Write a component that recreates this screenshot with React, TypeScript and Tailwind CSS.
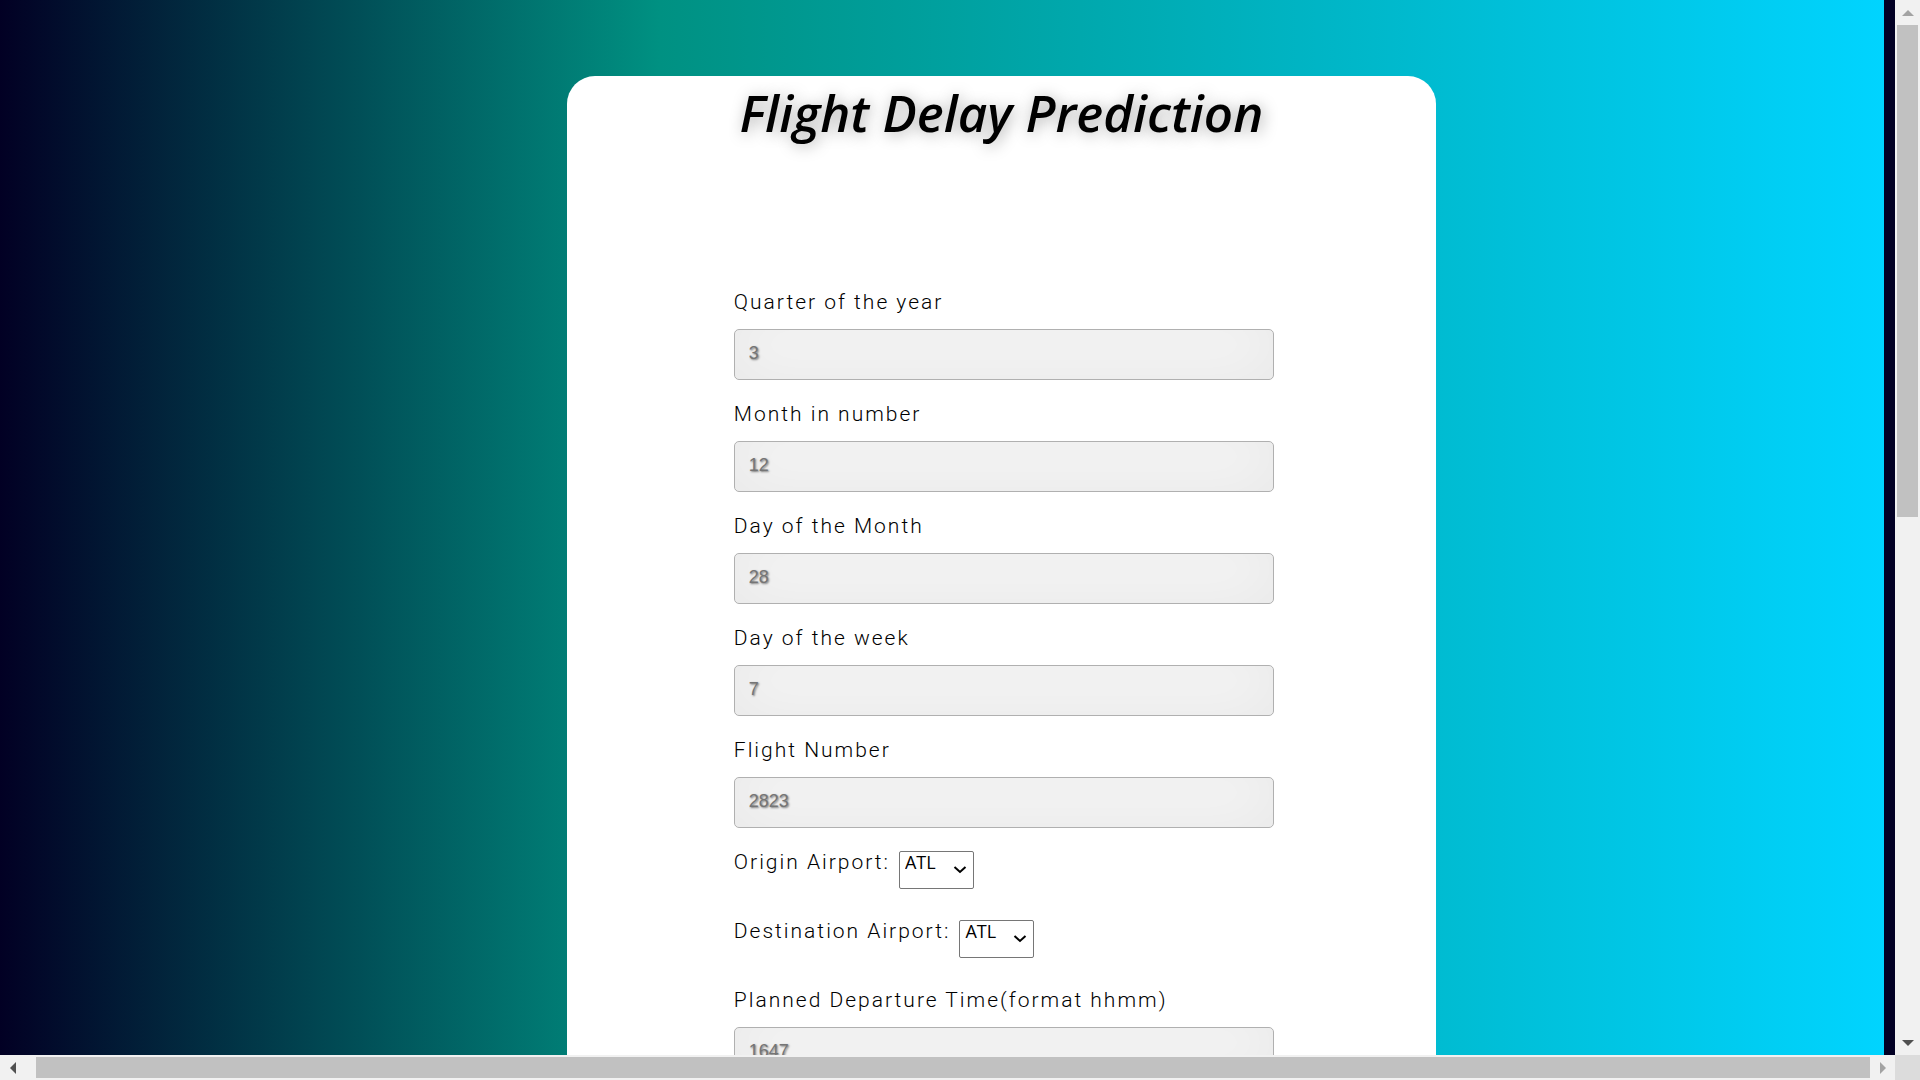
import React from "react";

const dateFields = [
  { id: "quarter", label: "Quarter of the year", placeholder: "3" },
  { id: "month", label: "Month in number", placeholder: "12" },
  { id: "day-of-month", label: "Day of the Month", placeholder: "28" },
  { id: "day-of-week", label: "Day of the week", placeholder: "7" },
  { id: "flight-number", label: "Flight Number", placeholder: "2823" },
];

const airportFields = [
  { id: "origin", label: "Origin Airport:" },
  { id: "destination", label: "Destination Airport:" },
];

const airports = ["ATL", "SEA", "DTW", "MSP", "JFK"];

const labelClass =
  "font-['Roboto',sans-serif] text-[21px] leading-7 font-light tracking-[2px] text-black";

function TextField({ id, label, placeholder }: { id: string; label: string; placeholder: string }) {
  return (
    <div className="flex flex-col gap-[13px] pb-5">
      <label htmlFor={id} className={labelClass}>
        {label}
      </label>
      <input
        id={id}
        type="text"
        placeholder={placeholder}
        className="h-[51px] w-full rounded-[5px] border border-[#b0b0b0] bg-[#f7f7f7] px-[14px] pb-[2px] font-['Liberation_Sans',Arial,sans-serif] text-[18px] text-black shadow-[inset_0_-10px_60px_#0000000f] [text-shadow:1px_1px_2px_#00000080] placeholder:text-[#757575] placeholder:opacity-100"
      />
    </div>
  );
}

function AirportField({ id, label }: { id: string; label: string }) {
  return (
    <div className="flex h-[69px] items-start gap-[9px]">
      <label htmlFor={id} className={labelClass}>
        {label}
      </label>
      <div className="relative mt-[3px]">
        <select
          id={id}
          className="block h-[38px] w-[75px] appearance-none rounded-[2px] border border-[#767676] bg-white pb-4 pl-[5px] font-['Open_Sans',sans-serif] text-[18px] leading-5 text-black"
        >
          {airports.map((code) => (
            <option key={code}>{code}</option>
          ))}
        </select>
        <svg
          viewBox="0 0 14 8"
          className="pointer-events-none absolute top-[15px] right-[7px] h-2 w-[14px] fill-none stroke-black stroke-2"
        >
          <path d="M1.5 1 L7 6 L12.5 1" />
        </svg>
      </div>
    </div>
  );
}

export default function App() {
  return (
    <div className="grid h-screen grid-cols-[1fr_25px] grid-rows-[1fr_25px] overflow-hidden">
      <main className="flex min-h-0 min-w-0 overflow-hidden bg-[#020024]">
        <div className="mr-[11px] flex-1 bg-[linear-gradient(90deg,#020024_0%,#009182_35%,#00d4ff_100%)]">
          <div className="mt-19 ml-[30.1%] flex w-[46.1%] flex-col rounded-t-[28px] bg-white pb-20">
            <h1 className="h-[212px] pt-[6px] text-center font-['Open_Sans',sans-serif] text-[51px] leading-15 font-semibold italic text-black [text-shadow:2px_2px_15px_#00000059]">
              Flight Delay Prediction
            </h1>
            <form className="ml-[19.2%] w-[62.2%]">
              {dateFields.map((field) => (
                <TextField key={field.id} {...field} />
              ))}
              {airportFields.map((field) => (
                <AirportField key={field.id} {...field} />
              ))}
              <TextField
                id="departure"
                label="Planned Departure Time(format hhmm)"
                placeholder="1647"
              />
            </form>
          </div>
        </div>
      </main>

      <div className="flex flex-col items-center bg-[#f1f1f1]">
        <button type="button" aria-label="Scroll up" className="flex h-[25px] w-full shrink-0 items-center justify-center">
          <svg viewBox="0 0 12 6" className="h-[6px] w-3 fill-[#a3a3a3]">
            <path d="M6 0 L12 6 H0 Z" />
          </svg>
        </button>
        <div className="flex w-full flex-1 justify-center">
          <div className="h-[49%] w-[21px] bg-[#c1c1c1]" />
        </div>
        <button type="button" aria-label="Scroll down" className="flex h-[25px] w-full shrink-0 items-center justify-center">
          <svg viewBox="0 0 12 6" className="h-[6px] w-3 fill-[#505050]">
            <path d="M0 0 H12 L6 6 Z" />
          </svg>
        </button>
      </div>

      <div className="flex items-center bg-[#f1f1f1]">
        <button type="button" aria-label="Scroll left" className="flex h-full w-[25px] shrink-0 items-center justify-center">
          <svg viewBox="0 0 6 12" className="h-3 w-[6px] fill-[#505050]">
            <path d="M6 0 V12 L0 6 Z" />
          </svg>
        </button>
        <div className="flex-1 pl-[11px]">
          <div className="h-[21px] bg-[#c1c1c1]" />
        </div>
        <button type="button" aria-label="Scroll right" className="flex h-full w-[25px] shrink-0 items-center justify-center">
          <svg viewBox="0 0 6 12" className="h-3 w-[6px] fill-[#a3a3a3]">
            <path d="M0 0 V12 L6 6 Z" />
          </svg>
        </button>
      </div>
      <div className="bg-[#dcdcdc]" />
    </div>
  );
}
